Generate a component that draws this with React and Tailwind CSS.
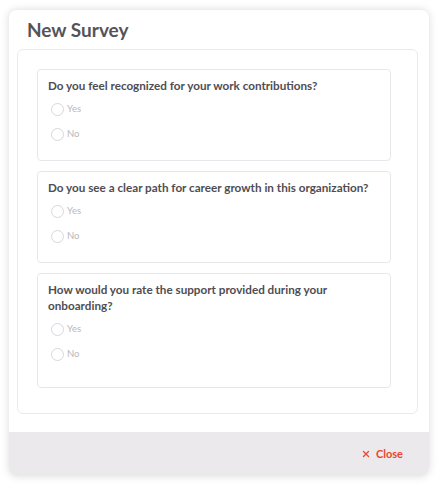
import React from "react";
import { X } from "lucide-react";

const questions = [
  { id: 1, text: "Do you feel recognized for your work contributions?", h: "h-[92px]" },
  { id: 2, text: "Do you see a clear path for career growth in this organization?", h: "h-[92px]" },
  { id: 3, text: "How would you rate the support provided during your onboarding?", h: "h-[115px]" },
];

const Option = ({ label }) => (
  <label className="flex items-center h-[20px] pl-[3px] gap-[3px]">
    <span className="w-[13px] h-[13px] rounded-full border border-[#d9d6dc] bg-white" />
    <span className="text-[9.5px] text-[#b9b7bb]">{label}</span>
  </label>
);

const QuestionCard = ({ q }) => (
  <div className={`border border-[#e8e6ea] rounded-[4px] pt-[7px] pl-[10px] pr-[4px] shrink-0 ${q.h}`}>
    <p className="text-[11.7px] leading-[16px] font-bold text-[#4f4d52]">
      {q.text}
    </p>
    <div className="mt-[6px] flex flex-col gap-[5px]">
      <Option label="Yes" />
      <Option label="No" />
    </div>
  </div>
);

export default function App() {
  return (
    <div
      className="w-[437px] h-[486px] bg-white pt-[10px] pl-[9px]"
      style={{ fontFamily: "Lato, 'Noto Sans', sans-serif" }}
    >
      <div className="w-[420px] h-[466px] rounded-[8px] bg-white shadow-[0_0_9px_rgba(0,0,0,0.15)] overflow-hidden flex flex-col">
        <div className="h-[39px] flex items-center pl-[18px] pt-[2px]">
          <h1 className="text-[19px] font-bold text-[#555358]">New Survey</h1>
        </div>
        <div className="ml-[8px] mr-[11px] h-[365px] border border-[#ebe9ed] rounded-[6px] pt-[19px] pl-[19px] pr-[26px] flex flex-col gap-[10px]">
          {questions.map((q) => (
            <QuestionCard key={q.id} q={q} />
          ))}
        </div>
        <div className="h-[18px]" />
        <div className="flex-1 bg-[#ece9ec] flex items-center justify-end pr-[26px]">
          <button className="flex items-center gap-[5px] text-[#e9472f] text-[11px] font-bold">
            <X size={10} strokeWidth={3} />
            Close
          </button>
        </div>
      </div>
    </div>
  );
}
